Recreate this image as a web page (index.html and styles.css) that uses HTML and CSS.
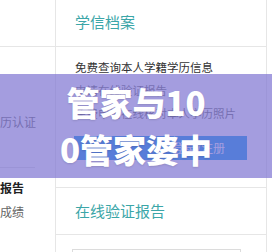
FILE: index.html
```html
<!DOCTYPE html>
<html lang="zh-CN">
<head>
  <meta charset="UTF-8" />
  <meta name="viewport" content="width=device-width, initial-scale=1.0" />
  <title>学信档案</title>
  <link rel="stylesheet" href="styles.css">
</head>
<body>
  <div class="page">
    <aside class="side">
      <div class="side-top"></div>
      <ul class="side-list">
        <li class="side-item">历认证</li>
        <li class="side-sep"></li>
        <li class="side-item strong">报告</li>
        <li class="side-item">成绩</li>
      </ul>
    </aside>

    <main class="panel">
      <section class="card">
        <h2 class="card-title">学信档案</h2>
        <ul class="card-list">
          <li>免费查询本人学籍学历信息</li>
          <li class="muted">申请在线验证报告</li>
          <li class="muted">免费申请在线核对本人学历照片</li>
        </ul>
        <div class="card-btn">登录/注册</div>
      </section>

      <section class="card second">
        <h2 class="card-title">在线验证报告</h2>
        <div class="verify-box"></div>
      </section>
    </main>

    <div class="banner">
      <p class="banner-text">管家与10<br>0管家婆中</p>
    </div>
  </div>
</body>
</html>
```

FILE: styles.css
```css
* {
  box-sizing: border-box;
}

body {
  margin: 0;
  background: #ffffff;
  font-family: "Noto Sans CJK SC", "Noto Sans", sans-serif;
  color: #333;
}

.page {
  position: relative;
  width: 272px;
  height: 252px;
  overflow: hidden;
  display: flex;
  background: #ffffff;
}

ul {
  list-style: none;
  margin: 0;
  padding: 0;
}

/* left column, cropped */
.side {
  width: 56px;
  flex-shrink: 0;
  border-right: 1px solid #e6e6e6;
}

.side-top {
  height: 47px;
  border-bottom: 1px solid #e6e6e6;
}

.side-list {
  padding-top: 63px;
}

.side-item {
  font-size: 12px;
  line-height: 24px;
  color: #666;
  white-space: nowrap;
}

.side-item.strong {
  color: #222;
  font-weight: 700;
}

.side-sep {
  width: 35px;
  height: 1px;
  background: #e2e2e2;
  margin: 33px 0 8px;
}

/* right panel */
.panel {
  width: 211px;
  flex-shrink: 0;
  border-right: 1px solid #e6e6e6;
}

.card-title {
  margin: 0;
  height: 47px;
  line-height: 44px;
  padding-left: 19px;
  font-size: 15px;
  font-weight: 400;
  color: #3ba6a8;
  border-bottom: 1px solid #e6e6e6;
}

.card-list {
  padding: 9px 0 0 19px;
}

.card-list li {
  font-size: 11.5px;
  line-height: 23px;
  color: #333;
  white-space: nowrap;
}

.card-list li.muted {
  color: #666;
}

.card-btn {
  margin: 11px 0 0 18px;
  width: 173px;
  height: 24px;
  background: #0093ea;
  color: #ffffff;
  font-size: 12px;
  line-height: 24px;
  text-align: right;
  padding-right: 22px;
}

.card.second {
  margin-top: 27px;
  border-top: 1px solid #e6e6e6;
}

.card.second .card-title {
  height: 47px;
  line-height: 46px;
}

.verify-box {
  margin: 14px 0 0 16px;
  width: 169px;
  height: 30px;
  border: 1px solid #dcdcdc;
}

/* purple title band laid over the page */
.banner {
  position: absolute;
  left: 0;
  top: 74px;
  width: 272px;
  height: 104px;
  background: rgba(126, 115, 209, 0.7);
  display: flex;
  align-items: center;
  justify-content: center;
}

.banner-text {
  margin: 0;
  text-align: center;
  color: #ffffff;
  font-size: 33px;
  font-weight: 900;
  line-height: 47px;
  text-shadow: 0 1px 2px rgba(0, 0, 0, 0.12);
}
```
